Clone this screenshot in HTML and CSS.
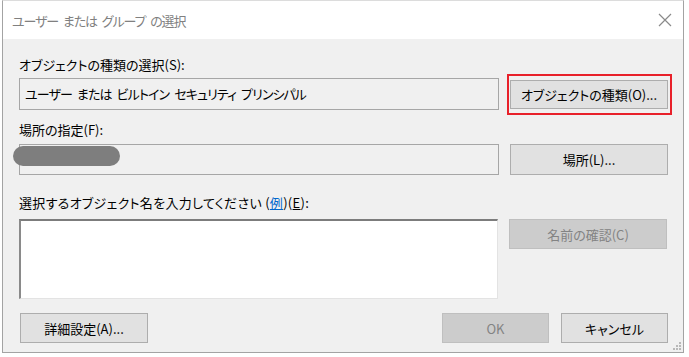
FILE: index.html
```html
<!DOCTYPE html>
<html lang="ja">
<head>
    <meta charset="UTF-8">
    <title>ユーザー または グループ の選択</title>
    <link rel="stylesheet" href="styles.css">
</head>
<body>
    <div class="window">
        <!-- Barre de titre -->
        <div class="titlebar">
            <span class="title">ユーザー または グループ の選択</span>
            <svg class="close" width="14" height="14" viewBox="0 0 14 14">
                <path d="M1 1 L13 13 M13 1 L1 13" stroke="#8a8a8a" stroke-width="1.2" fill="none"/>
            </svg>
        </div>

        <div class="content">
            <div class="label label-first">オブジェクトの種類の選択(S):</div>
            <div class="row row-center">
                <div class="box">ユーザー または ビルトイン セキュリティ プリンシパル</div>
                <div class="highlight">
                    <button class="btn btn-side">オブジェクトの種類(O)...</button>
                </div>
            </div>

            <div class="label label-second">場所の指定(F):</div>
            <div class="row row-center">
                <div class="box box-location">
                    <span class="redacted"></span>
                </div>
                <button class="btn btn-side btn-tall">場所(L)...</button>
            </div>

            <div class="label label-third">選択するオブジェクト名を入力してください (<a href="#" class="link">例</a>)(<u>E</u>):</div>
            <div class="row row-top">
                <div class="textarea"></div>
                <button class="btn btn-side" disabled>名前の確認(C)</button>
            </div>

            <div class="footer">
                <button class="btn btn-advanced">詳細設定(A)...</button>
                <div class="footer-right">
                    <button class="btn btn-small" disabled>OK</button>
                    <button class="btn btn-small">キャンセル</button>
                </div>
            </div>
            <svg class="grip" width="8" height="8" viewBox="0 0 8 8">
                <rect x="6" y="0" width="2" height="2" fill="#b8b8b8"/>
                <rect x="3" y="3" width="2" height="2" fill="#b8b8b8"/>
                <rect x="6" y="3" width="2" height="2" fill="#b8b8b8"/>
                <rect x="0" y="6" width="2" height="2" fill="#b8b8b8"/>
                <rect x="3" y="6" width="2" height="2" fill="#b8b8b8"/>
                <rect x="6" y="6" width="2" height="2" fill="#b8b8b8"/>
            </svg>
        </div>
    </div>
</body>
</html>
```

FILE: styles.css
```css
body {
    margin: 0;
    background: #ffffff;
    font-family: "Noto Sans CJK JP", sans-serif;
    font-feature-settings: "palt";
    font-size: 13px;
    color: #000;
}
/* Fenêtre */
.window {
    width: 680px;
    margin-left: 2px;
    border: 1px solid #a3a3a3;
    border-top-color: #dcdcdc;
    background: #f0f0f0;
}
.titlebar {
    height: 38px;
    background: #ffffff;
    display: flex;
    align-items: center;
    justify-content: space-between;
    padding: 0 11px 0 9px;
}
.title {
    color: #808080;
    font-size: 13px;
    letter-spacing: -1.1px;
    word-spacing: 3px;
}
.close {
    margin-bottom: 1px;
}
.content {
    position: relative;
    padding: 0 15px 9px 16px;
}
.label {
    height: 20px;
    line-height: 20px;
}
.label-first {
    padding-top: 16px;
    margin-bottom: 3px;
}
.label-second {
    margin-top: 10px;
    margin-bottom: 4px;
}
.label-third {
    margin-top: 18px;
    margin-bottom: 6px;
    letter-spacing: 0.3px;
}
.link {
    color: #0066cc;
}
.row {
    display: flex;
    gap: 11px;
}
.row-center {
    align-items: center;
}
.row-top {
    align-items: flex-start;
}
.box {
    width: 473px;
    height: 30px;
    border: 1px solid #a6a6a6;
    background: #f0f0f0;
    padding-left: 5px;
    line-height: 30px;
    font-size: 13px;
    letter-spacing: -0.9px;
    word-spacing: 3px;
}
.box-location {
    position: relative;
    height: 29px;
}
/* Zone masquée */
.redacted {
    position: absolute;
    left: -7px;
    top: 1px;
    width: 107px;
    height: 20px;
    border-radius: 10px;
    background: #7e7e7e;
}
.textarea {
    width: 476px;
    height: 77px;
    background: #ffffff;
    border: 1px solid #e3e3e3;
    border-top: 2px solid #7c7c7c;
    border-left: 2px solid #8a8a8a;
}
.btn {
    font-family: inherit;
    font-feature-settings: "palt";
    font-size: 13px;
    background: #e1e1e1;
    border: 1px solid #adadad;
    color: #000;
    height: 30px;
    padding: 0;
    cursor: pointer;
}
.btn:disabled {
    background: #cccccc;
    border-color: #bfbfbf;
    color: #838383;
}
.btn-side {
    width: 158px;
    height: 30px;
}
.btn-tall {
    height: 31px;
}
.highlight {
    margin: -6px -4px -6px -3px;
    padding: 4px 2px 4px 1px;
    border: 2px solid #e8202a;
    display: flex;
}
.highlight .btn-side {
    height: 29px;
}
.footer {
    display: flex;
    justify-content: space-between;
    margin-top: 14px;
}
.btn-advanced {
    width: 128px;
    margin-left: 1px;
}
.footer-right {
    display: flex;
    gap: 12px;
}
.btn-small {
    width: 107px;
}
.grip {
    position: absolute;
    right: 2px;
    bottom: 2px;
}
```
